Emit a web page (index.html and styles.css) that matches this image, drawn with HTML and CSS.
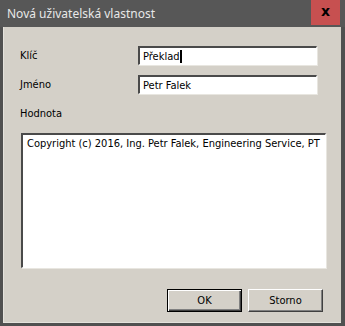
FILE: index.html
```html
<!DOCTYPE html>
<html lang="cs">
<head>
    <meta charset="UTF-8">
    <meta name="viewport" content="width=device-width, initial-scale=1.0">
    <title>Nová uživatelská vlastnost</title>
    <link rel="stylesheet" href="styles.css">
</head>
<body>
    <div class="window">
        <div class="titlebar">
            <span class="title">Nová uživatelská vlastnost</span>
            <span class="close">x</span>
        </div>

        <div class="client">
            <div class="row">
                <span class="label">Klíč</span>
                <div class="edit">Překlad<span class="caret"></span></div>
            </div>
            <div class="row">
                <span class="label">Jméno</span>
                <div class="edit">Petr Falek</div>
            </div>
            <div class="row">
                <span class="label">Hodnota</span>
            </div>

            <div class="memo">Copyright (c) 2016, Ing. Petr Falek, Engineering Service, PT</div>

            <div class="buttons">
                <button class="btn default">OK</button>
                <button class="btn">Storno</button>
            </div>
        </div>
    </div>
</body>
</html>
```

FILE: styles.css
```css
body {
    margin: 0;
    background: #4f4f4f;
}
.window {
    width: 345px;
    height: 326px;
    display: flex;
    flex-direction: column;
    background: #505050;
    font-family: 'DejaVu Sans Condensed', 'Liberation Sans', sans-serif;
    font-size: 11px;
    color: #000;
}
.titlebar {
    height: 27px;
    display: flex;
    align-items: flex-start;
    justify-content: space-between;
    background: #575757;
    padding-right: 5px;
}
.title {
    font-family: 'Noto Sans', sans-serif;
    font-size: 12px;
    color: #e8e8e8;
    padding: 5px 0 0 7px;
}
.close {
    width: 29px;
    height: 25px;
    background: #c75050;
    color: #000;
    font-family: 'DejaVu Sans', sans-serif;
    font-weight: bold;
    font-size: 14px;
    line-height: 22px;
    text-align: center;
}
.client {
    flex: 1;
    margin: 0 4px 3px 3px;
    background: #d4d0c8;
    padding-top: 19px;
    box-shadow: inset 1px 0 0 #e4e2dc, inset 0 -1px 0 #e4e2dc;
}
.row {
    display: grid;
    grid-template-columns: 118px 179px;
    height: 19px;
    margin: 0 0 10px 17px;
}
.label {
    padding-top: 3px;
}
.edit,
.memo {
    background: #fff;
    border-style: solid;
    border-width: 2px 1px 1px 2px;
    border-color: #4a4a4a #ffffff #ffffff #4a4a4a;
    box-shadow: 1px 1px 0 #e8e6e0;
}
.edit {
    box-sizing: border-box;
    height: 19px;
    padding: 2px 3px;
    line-height: 13px;
    white-space: nowrap;
}
.caret {
    display: inline-block;
    width: 2px;
    height: 13px;
    background: #000;
    vertical-align: top;
}
.memo {
    box-sizing: border-box;
    width: 305px;
    height: 135px;
    margin-left: 18px;
    padding: 2px 4px;
    line-height: 14px;
}
.buttons {
    display: flex;
    gap: 6px;
    margin: 21px 0 0 164px;
}
.btn {
    box-sizing: border-box;
    width: 75px;
    height: 23px;
    padding: 0;
    background: #d4d0c8;
    font-family: inherit;
    font-size: 11px;
    color: #000;
    border: 1px solid;
    border-color: #ffffff #404040 #404040 #ffffff;
    box-shadow: inset -1px -1px 0 #808080;
}
.btn.default {
    border-color: #000;
    box-shadow: inset 1px 1px 0 #fff, inset -1px -1px 0 #404040, inset -2px -2px 0 #808080;
}
```
